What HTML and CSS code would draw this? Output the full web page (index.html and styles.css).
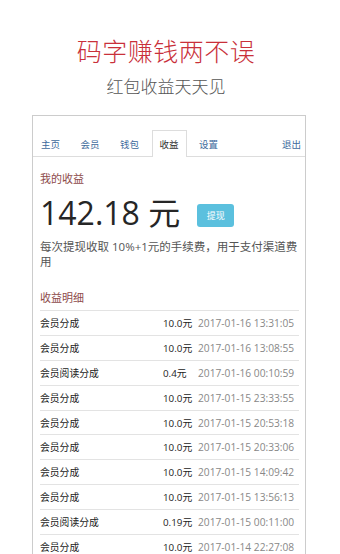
FILE: index.html
```html
<!DOCTYPE html>
<html lang="zh-CN">
<head>
<meta charset="utf-8">
<title>码字赚钱两不误</title>
<link rel="stylesheet" href="styles.css">
</head>
<body>
<header class="hero">
  <h1 class="hero-title">码字赚钱两不误</h1>
  <p class="hero-sub">红包收益天天见</p>
</header>
<section class="frame">
  <nav class="tabs">
    <a class="tab">主页</a>
    <a class="tab">会员</a>
    <a class="tab">钱包</a>
    <a class="tab active">收益</a>
    <a class="tab">设置</a>
    <a class="tab logout">退出</a>
  </nav>
  <div class="content">
    <h2 class="sec-title">我的收益</h2>
    <div class="balance">
      <span class="amount-big"><span class="amount-num">142.18</span> 元</span>
      <span class="btn">提现</span>
    </div>
    <p class="fee">每次提现收取 10%+1元的手续费，用于支付渠道费用</p>
    <h2 class="sec-title detail-title">收益明细</h2>
    <div class="rows">
      <div class="row"><span class="label">会员分成</span><span class="money">10.0元</span><span class="date">2017-01-16 13:31:05</span></div>
      <div class="row"><span class="label">会员分成</span><span class="money">10.0元</span><span class="date">2017-01-16 13:08:55</span></div>
      <div class="row"><span class="label">会员阅读分成</span><span class="money">0.4元</span><span class="date">2017-01-16 00:10:59</span></div>
      <div class="row"><span class="label">会员分成</span><span class="money">10.0元</span><span class="date">2017-01-15 23:33:55</span></div>
      <div class="row"><span class="label">会员分成</span><span class="money">10.0元</span><span class="date">2017-01-15 20:53:18</span></div>
      <div class="row"><span class="label">会员分成</span><span class="money">10.0元</span><span class="date">2017-01-15 20:33:06</span></div>
      <div class="row"><span class="label">会员分成</span><span class="money">10.0元</span><span class="date">2017-01-15 14:09:42</span></div>
      <div class="row"><span class="label">会员分成</span><span class="money">10.0元</span><span class="date">2017-01-15 13:56:13</span></div>
      <div class="row"><span class="label">会员阅读分成</span><span class="money">0.19元</span><span class="date">2017-01-15 00:11:00</span></div>
      <div class="row"><span class="label">会员分成</span><span class="money">10.0元</span><span class="date">2017-01-14 22:27:08</span></div>
    </div>
  </div>
</section>
</body>
</html>
```
FILE: styles.css
```css
html, body {
  margin: 0;
  padding: 0;
  background: #fff;
}
body {
  width: 340px;
  height: 554px;
  overflow: hidden;
  font-family: "Open Sans", "Noto Sans CJK SC", sans-serif;
  color: #333;
}
.hero {
  padding: 35px 8px 0 0;
  text-align: center;
}
.hero-title {
  margin: 0;
  font-family: "Noto Sans CJK SC", sans-serif;
  font-weight: 300;
  font-size: 25px;
  line-height: 30px;
  letter-spacing: 0.5px;
  color: #c9303a;
}
.hero-sub {
  margin: 9px 0 0;
  font-family: "Noto Sans CJK SC", sans-serif;
  font-weight: 300;
  font-size: 17px;
  line-height: 24px;
  color: #555;
}
.frame {
  margin: 17px 0 0 32px;
  width: 272px;
  height: 440px;
  border: 1px solid #ccc;
  border-bottom: none;
}
.tabs {
  display: flex;
  padding-top: 14px;
  border-bottom: 1px solid #ddd;
  font-family: "Noto Sans CJK SC", sans-serif;
  font-size: 9.5px;
}
.tab {
  display: block;
  height: 26px;
  line-height: 26px;
  padding: 0 7px;
  margin-right: 4.5px;
  color: #3d6a9c;
  border: 1px solid transparent;
  border-bottom: none;
  box-sizing: border-box;
  margin-bottom: -1px;
}
.tab.active {
  color: #333;
  background: #fff;
  border-color: #ddd;
  height: 27px;
}
.tab.logout {
  margin-left: auto;
  margin-right: 0;
  padding: 0 3px 0 0;
}
.content {
  padding: 0 6px 0 7px;
}
.sec-title {
  margin: 13px 0 0;
  font-family: "Noto Sans CJK SC", sans-serif;
  font-weight: normal;
  font-size: 11px;
  line-height: 16px;
  color: #8e4b4b;
}
.balance {
  display: flex;
  align-items: center;
  margin-top: 6.6px;
}
.amount-big {
  font-size: 32px;
  font-weight: 400;
  line-height: 40px;
  color: #262626;
}
.amount-num {
  font-weight: 500;
}
.btn {
  margin: 6px 0 0 17px;
  display: block;
  width: 37px;
  height: 23px;
  line-height: 23px;
  text-align: center;
  background: #5bc0de;
  color: #fff;
  border-radius: 3px;
  font-family: "Noto Sans CJK SC", sans-serif;
  font-size: 9px;
}
.fee {
  margin: 6.6px 0 0;
  font-size: 11.5px;
  line-height: 15px;
  color: #555;
}
.detail-title {
  margin-top: 19.8px;
}
.rows {
  margin-top: 5.5px;
}
.row {
  display: flex;
  align-items: center;
  height: 24.8px;
  box-sizing: border-box;
  border-top: 1px solid #e3e3e3;
}
.label {
  flex: 1;
  font-size: 9.8px;
  color: #222;
}
.money {
  width: 35px;
  font-size: 9.8px;
  color: #222;
}
.date {
  width: 101px;
  font-size: 10.2px;
  color: #888;
}
```
